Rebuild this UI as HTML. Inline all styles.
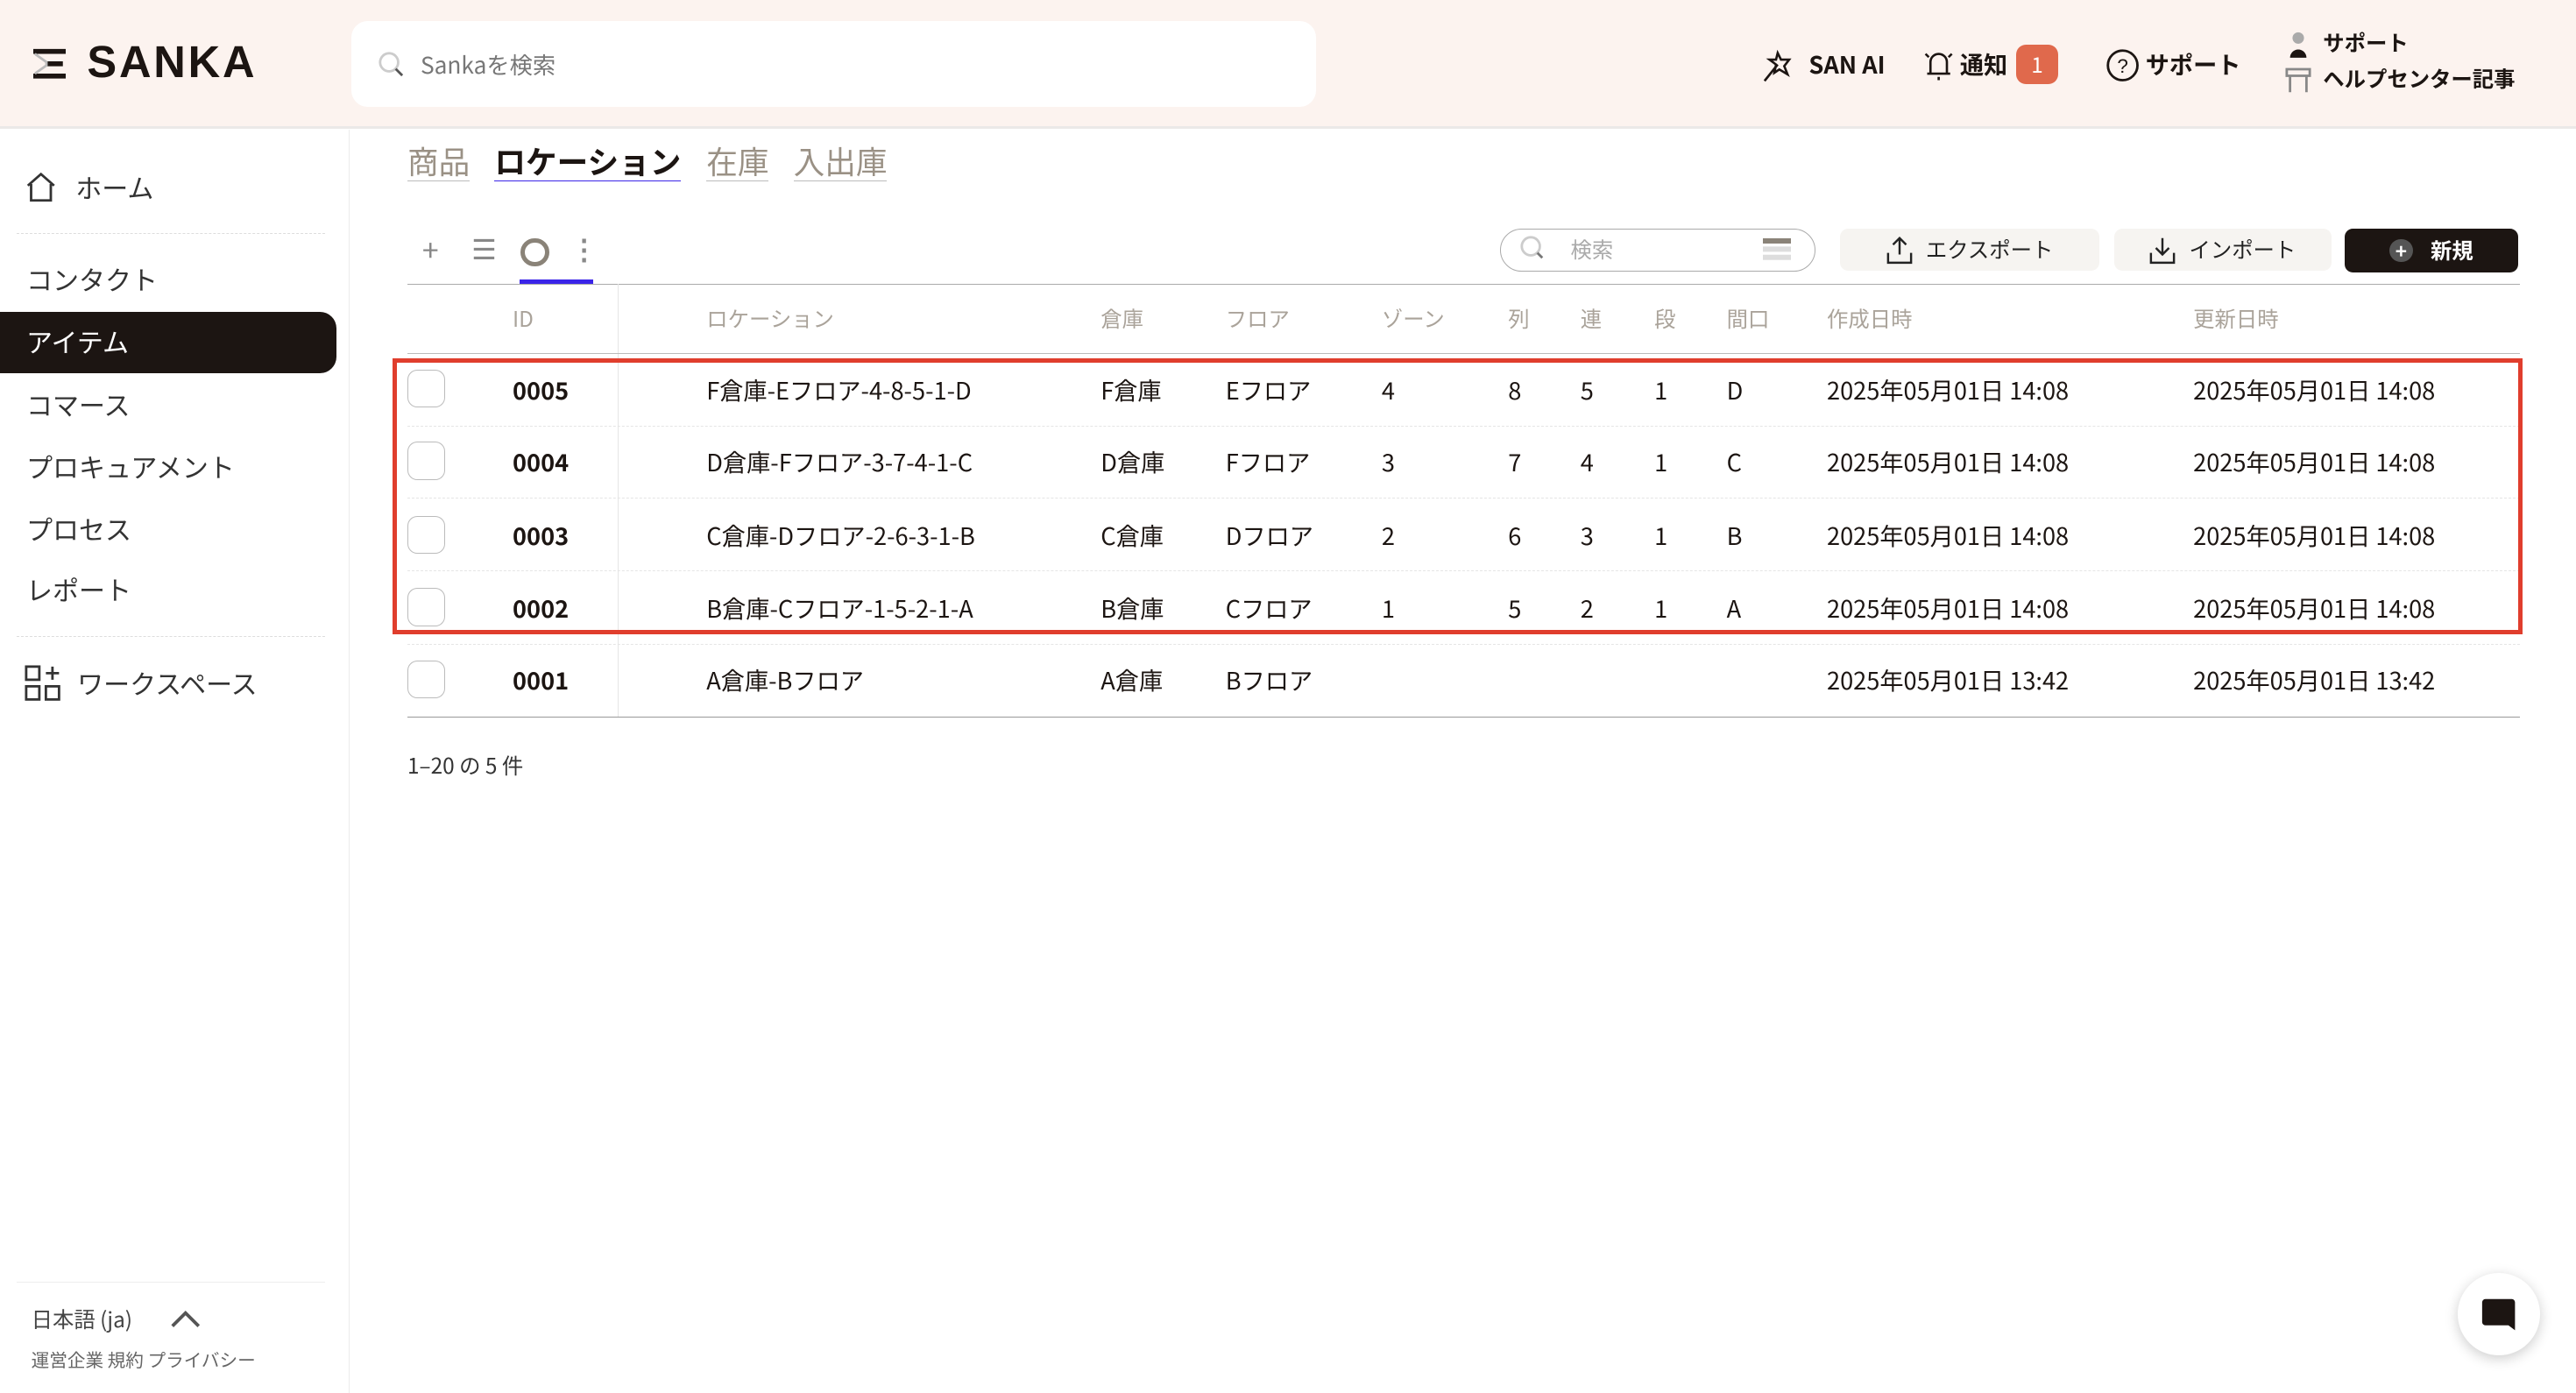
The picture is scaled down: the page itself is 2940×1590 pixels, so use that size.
<!DOCTYPE html>
<html><head><meta charset="utf-8"><style>
html,body{margin:0;padding:0;background:#fff;}
body{width:2940px;height:1590px;overflow:hidden;}
#r{zoom:1.875;width:1568px;height:848px;position:relative;font-family:"Noto Sans CJK JP","Liberation Sans",sans-serif;color:#1c1512;line-height:1.2;}
.a{position:absolute;white-space:nowrap;}
.hdr{position:absolute;left:0;top:0;width:1568px;height:77px;background:#fcf3ef;border-bottom:2px solid #ebe9e8;}
.side{position:absolute;left:0;top:79px;width:212px;height:769px;border-right:1px solid #ececec;}
.nav{position:absolute;left:16px;font-size:16px;color:#333;}
.dash{position:absolute;left:10px;width:188px;border-top:1px dashed #ddd;}
.th{position:absolute;top:186px;font-size:13px;color:#aaa39a;}
.td{position:absolute;font-size:14.5px;color:#1c1512;}
.cb{position:absolute;left:248px;width:22px;height:22px;border:1px solid #bbb;border-radius:6px;background:#fff;}
.btn{position:absolute;top:139px;height:26px;background:#f6f4f1;border-radius:5px;font-size:13px;color:#222;display:flex;align-items:center;justify-content:center;gap:8px;}
</style></head><body><div id="r">
<div class="hdr"></div>
<svg class="a" style="left:20px;top:29px" width="20" height="20" viewBox="0 0 20 20"><path d="M0 1h20v3H0zM0 16h20v3H0zM8 8.5h10v3H8z" fill="#1c1512"/><path d="M1 4l7 5v2l-7 5" fill="none" stroke="#bbb" stroke-width="1.5"/></svg>
<div class="a" style="left:53px;top:22px;font-size:27px;font-weight:bold;letter-spacing:1.5px;font-family:'Liberation Sans',sans-serif;">SANKA</div>
<div class="a" style="left:214px;top:13px;width:587px;height:52px;background:#fff;border-radius:10px;"></div>
<svg class="a" style="left:230px;top:31px" width="16" height="16" viewBox="0 0 16 16"><circle cx="7" cy="7" r="5.5" fill="none" stroke="#ccc" stroke-width="1.5"/><path d="M11 11l4 4" stroke="#555" stroke-width="1.5"/></svg>
<div class="a" style="left:256px;top:31px;font-size:14px;color:#777;">Sankaを検索</div>
<svg class="a" style="left:1073px;top:28px" width="22" height="22" viewBox="0 0 22 22"><path d="M1 21L9 11M9 4l2 4 5 0-3 4 2 5-5-3-3 2 1-5-4-3h4z" fill="none" stroke="#1c1512" stroke-width="1.4"/></svg>
<div class="a" style="left:1101px;top:30px;font-size:14.5px;font-weight:bold;">SAN AI</div>
<svg class="a" style="left:1169px;top:29px" width="22" height="22" viewBox="0 0 22 22"><path d="M4 16h14M6 16V9a5 5 0 0 1 10 0v7M11 18v2M3 4l2 2M19 4l-2 2" fill="none" stroke="#1c1512" stroke-width="1.4"/></svg>
<div class="a" style="left:1193px;top:30px;font-size:14.5px;font-weight:bold;">通知</div>
<div class="a" style="left:1227px;top:27px;width:26px;height:24px;background:#e0694c;border-radius:6px;color:#fff;font-size:13px;text-align:center;line-height:24px;">1</div>
<svg class="a" style="left:1281px;top:29px" width="22" height="22" viewBox="0 0 22 22"><circle cx="11" cy="11" r="9" fill="none" stroke="#1c1512" stroke-width="1.5"/><text x="11" y="15.5" font-size="12" text-anchor="middle" fill="#1c1512" font-family="Liberation Sans">?</text></svg>
<div class="a" style="left:1306px;top:30px;font-size:14.5px;font-weight:bold;">サポート</div>
<svg class="a" style="left:1391px;top:18px" width="16" height="40" viewBox="0 0 16 40"><circle cx="8" cy="5" r="3.5" fill="#aaa"/><path d="M3 17a5 5 0 0 1 10 0z" fill="#1c1512"/><path d="M1 24h14v4H1zM3 28v10M13 28v10" stroke="#888" stroke-width="1.5" fill="none"/></svg>
<div class="a" style="left:1414px;top:18px;font-size:13px;font-weight:bold;">サポート</div>
<div class="a" style="left:1414px;top:40px;font-size:13px;font-weight:bold;">ヘルプセンター記事</div>

<div class="side"></div>
<svg class="a" style="left:15px;top:104px" width="20" height="20" viewBox="0 0 20 20"><path d="M2 9L10 2l8 7M4 8v10h12V8" fill="none" stroke="#333" stroke-width="1.5"/></svg>
<div class="nav" style="left:46px;top:104px;">ホーム</div>
<div class="dash" style="top:142px;"></div>
<div class="nav" style="top:160px;">コンタクト</div>
<div class="a" style="left:0;top:190px;width:205px;height:37px;background:#1c1512;border-radius:0 10px 10px 0;"></div>
<div class="nav" style="top:198px;color:#fff;">アイテム</div>
<div class="nav" style="top:236px;">コマース</div>
<div class="nav" style="top:274px;">プロキュアメント</div>
<div class="nav" style="top:312px;">プロセス</div>
<div class="nav" style="top:349px;">レポート</div>
<div class="dash" style="top:387px;"></div>
<svg class="a" style="left:15px;top:405px" width="22" height="22" viewBox="0 0 22 22"><g fill="none" stroke="#333" stroke-width="1.5"><rect x="1" y="1" width="8" height="8"/><rect x="1" y="13" width="8" height="8"/><rect x="13" y="13" width="8" height="8"/><path d="M17 1v8M13 5h8"/></g></svg>
<div class="nav" style="left:47px;top:406px;">ワークスペース</div>
<div class="dash" style="top:780px;border-top-style:solid;border-color:#eee;"></div>
<div class="a" style="left:19px;top:795px;font-size:13px;color:#444;">日本語 (ja)</div>
<svg class="a" style="left:103px;top:796px" width="20" height="14" viewBox="0 0 20 14"><path d="M2 11l8-8 8 8" fill="none" stroke="#555" stroke-width="2"/></svg>
<div class="a" style="left:19px;top:821px;font-size:11px;color:#666;">運営企業 規約 プライバシー</div>

<div class="a" style="left:248px;top:87px;font-size:19px;color:#9a9185;border-bottom:1px solid #bbb;">商品</div>
<div class="a" style="left:301px;top:87px;font-size:19px;font-weight:bold;border-bottom:1px solid #3a24e8;">ロケーション</div>
<div class="a" style="left:430px;top:87px;font-size:19px;color:#9a9185;border-bottom:1px solid #bbb;">在庫</div>
<div class="a" style="left:483px;top:87px;font-size:19px;color:#9a9185;border-bottom:1px solid #bbb;">入出庫</div>

<div class="a" style="left:257px;top:141px;font-size:18px;color:#888;">+</div>
<div class="a" style="left:287px;top:141px;font-size:17px;color:#888;">☰</div>
<div class="a" style="left:317px;top:145px;width:12px;height:12px;border:3px solid #8a8378;border-radius:50%;"></div>
<div class="a" style="left:347px;top:141px;font-size:17px;color:#888;font-weight:bold;">⋮</div>
<div class="a" style="left:316px;top:170px;width:45px;height:3px;background:#3a24e8;"></div>
<div class="a" style="left:248px;top:173px;width:1286px;border-top:1px solid #aaa;"></div>

<div class="a" style="left:913px;top:139px;width:191px;height:25px;border:1px solid #aaa;border-radius:14px;"></div>
<svg class="a" style="left:925px;top:143px" width="16" height="16" viewBox="0 0 16 16"><circle cx="7" cy="7" r="5.5" fill="none" stroke="#ccc" stroke-width="1.5"/><path d="M11 11l3 3" stroke="#777" stroke-width="1.5"/></svg>
<div class="a" style="left:956px;top:144px;font-size:13px;color:#aaa;">検索</div>
<div class="a" style="left:1073px;top:145px;width:17px;height:3px;background:#8a8378;box-shadow:0 5px 0 #ddd,0 10px 0 #ddd;"></div>
<div class="btn" style="left:1120px;width:158px;"><svg width="16" height="18" viewBox="0 0 16 18"><path d="M8 12V2M4 6l4-4 4 4M1 11v6h14v-6" fill="none" stroke="#222" stroke-width="1.3"/></svg>エクスポート</div>
<div class="btn" style="left:1287px;width:132px;"><svg width="16" height="18" viewBox="0 0 16 18"><path d="M8 2v10M4 8l4 4 4-4M1 11v6h14v-6" fill="none" stroke="#222" stroke-width="1.3"/></svg>インポート</div>
<div class="btn" style="left:1427px;width:106px;top:139px;height:27px;background:#1c1512;color:#fff;font-weight:bold;"><span style="display:inline-block;width:14px;height:14px;border-radius:50%;background:#555;color:#fff;font-size:12px;line-height:14px;text-align:center;">+</span>&nbsp;新規</div>

<div class="th" style="left:312px">ID</div>
<div class="th" style="left:430px">ロケーション</div>
<div class="th" style="left:670px">倉庫</div>
<div class="th" style="left:746px">フロア</div>
<div class="th" style="left:841px">ゾーン</div>
<div class="th" style="left:918px">列</div>
<div class="th" style="left:962px">連</div>
<div class="th" style="left:1007px">段</div>
<div class="th" style="left:1051px">間口</div>
<div class="th" style="left:1112px">作成日時</div>
<div class="th" style="left:1335px">更新日時</div>
<div class="a" style="left:376px;top:173px;height:263px;border-left:1px solid #e5e5e5;"></div>
<div class="a" style="left:248px;top:215px;width:1286px;border-top:1px solid #bbb;"></div>
<div class="a" style="left:248px;top:259px;width:1286px;border-top:1px dashed #e5e5e5;"></div>
<div class="a" style="left:248px;top:303px;width:1286px;border-top:1px dashed #e5e5e5;"></div>
<div class="a" style="left:248px;top:347px;width:1286px;border-top:1px dashed #e5e5e5;"></div>
<div class="a" style="left:248px;top:392px;width:1286px;border-top:1px dashed #e5e5e5;"></div>
<div class="a" style="left:248px;top:436px;width:1286px;border-top:1px solid #999;"></div>

<div class="cb" style="top:225px"></div><div class="td" style="top:228px;left:312px;font-weight:bold">0005</div><div class="td" style="top:228px;left:430px">F倉庫-Eフロア-4-8-5-1-D</div><div class="td" style="top:228px;left:670px">F倉庫</div><div class="td" style="top:228px;left:746px">Eフロア</div><div class="td" style="top:228px;left:841px">4</div><div class="td" style="top:228px;left:918px">8</div><div class="td" style="top:228px;left:962px">5</div><div class="td" style="top:228px;left:1007px">1</div><div class="td" style="top:228px;left:1051px">D</div><div class="td" style="top:228px;left:1112px">2025年05月01日 14:08</div><div class="td" style="top:228px;left:1335px">2025年05月01日 14:08</div>
<div class="cb" style="top:269px"></div><div class="td" style="top:272px;left:312px;font-weight:bold">0004</div><div class="td" style="top:272px;left:430px">D倉庫-Fフロア-3-7-4-1-C</div><div class="td" style="top:272px;left:670px">D倉庫</div><div class="td" style="top:272px;left:746px">Fフロア</div><div class="td" style="top:272px;left:841px">3</div><div class="td" style="top:272px;left:918px">7</div><div class="td" style="top:272px;left:962px">4</div><div class="td" style="top:272px;left:1007px">1</div><div class="td" style="top:272px;left:1051px">C</div><div class="td" style="top:272px;left:1112px">2025年05月01日 14:08</div><div class="td" style="top:272px;left:1335px">2025年05月01日 14:08</div>
<div class="cb" style="top:314px"></div><div class="td" style="top:317px;left:312px;font-weight:bold">0003</div><div class="td" style="top:317px;left:430px">C倉庫-Dフロア-2-6-3-1-B</div><div class="td" style="top:317px;left:670px">C倉庫</div><div class="td" style="top:317px;left:746px">Dフロア</div><div class="td" style="top:317px;left:841px">2</div><div class="td" style="top:317px;left:918px">6</div><div class="td" style="top:317px;left:962px">3</div><div class="td" style="top:317px;left:1007px">1</div><div class="td" style="top:317px;left:1051px">B</div><div class="td" style="top:317px;left:1112px">2025年05月01日 14:08</div><div class="td" style="top:317px;left:1335px">2025年05月01日 14:08</div>
<div class="cb" style="top:358px"></div><div class="td" style="top:361px;left:312px;font-weight:bold">0002</div><div class="td" style="top:361px;left:430px">B倉庫-Cフロア-1-5-2-1-A</div><div class="td" style="top:361px;left:670px">B倉庫</div><div class="td" style="top:361px;left:746px">Cフロア</div><div class="td" style="top:361px;left:841px">1</div><div class="td" style="top:361px;left:918px">5</div><div class="td" style="top:361px;left:962px">2</div><div class="td" style="top:361px;left:1007px">1</div><div class="td" style="top:361px;left:1051px">A</div><div class="td" style="top:361px;left:1112px">2025年05月01日 14:08</div><div class="td" style="top:361px;left:1335px">2025年05月01日 14:08</div>
<div class="cb" style="top:402px"></div><div class="td" style="top:405px;left:312px;font-weight:bold">0001</div><div class="td" style="top:405px;left:430px">A倉庫-Bフロア</div><div class="td" style="top:405px;left:670px">A倉庫</div><div class="td" style="top:405px;left:746px">Bフロア</div><div class="td" style="top:405px;left:1112px">2025年05月01日 13:42</div><div class="td" style="top:405px;left:1335px">2025年05月01日 13:42</div>

<div class="a" style="left:239px;top:218px;width:1291px;height:163px;border:3px solid #e03e2d;"></div>
<div class="a" style="left:248px;top:458px;font-size:13px;color:#333;">1–20 の 5 件</div>

<div class="a" style="left:1496px;top:775px;width:50px;height:50px;border-radius:50%;background:#fff;box-shadow:0 2px 8px rgba(0,0,0,.2);"></div>
<svg class="a" style="left:1510px;top:789px" width="22" height="22" viewBox="0 0 22 22"><path d="M3 2h16a2 2 0 0 1 2 2v17l-4-3H3a2 2 0 0 1-2-2V4a2 2 0 0 1 2-2z" fill="#1c1512"/></svg>
</div></body></html>
